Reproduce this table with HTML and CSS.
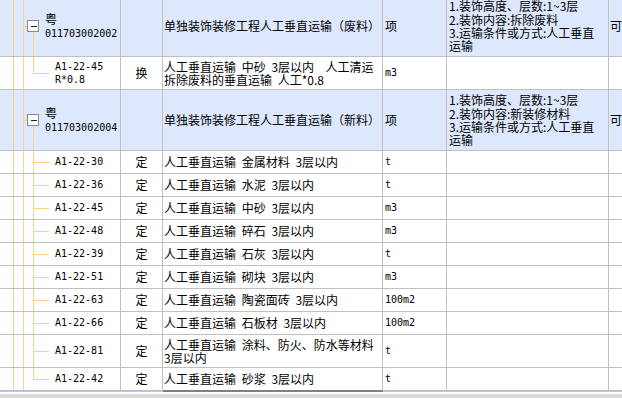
FILE: index.html
```html
<!DOCTYPE html>
<html lang="zh-CN">
<head>
<meta charset="utf-8">
<title>清单</title>
<link rel="stylesheet" href="styles.css">
</head>
<body>
<div class="grid">
  <div class="row head h61">
    <div class="c tree gh"><span class="box"></span><div class="gname">粤<br><span class="mono">011703002002</span></div></div>
    <div class="c type"></div>
    <div class="c name">单独装饰装修工程人工垂直运输（废料）</div>
    <div class="c unit">项</div>
    <div class="c feat">1.装饰高度、层数:1~3层<br>2.装饰内容:拆除废料<br>3.运输条件或方式:人工垂直<br>运输</div>
    <div class="c more">可</div>
  </div>
  <div class="row h33">
    <div class="c tree cl"><span class="code mono">A1-22-45<br>R*0.8</span></div>
    <div class="c type">换</div>
    <div class="c name">人工垂直运输 中砂 3层以内&nbsp; 人工清运<br>拆除废料的垂直运输 人工*0.8</div>
    <div class="c unit mono">m3</div>
    <div class="c feat"></div>
    <div class="c more"></div>
  </div>
  <div class="row head h61">
    <div class="c tree gh"><span class="box"></span><div class="gname">粤<br><span class="mono">011703002004</span></div></div>
    <div class="c type"></div>
    <div class="c name">单独装饰装修工程人工垂直运输（新料）</div>
    <div class="c unit">项</div>
    <div class="c feat">1.装饰高度、层数:1~3层<br>2.装饰内容:新装修材料<br>3.运输条件或方式:人工垂直<br>运输</div>
    <div class="c more">可</div>
  </div>
  <div class="row h23">
    <div class="c tree ch"><span class="code mono">A1-22-30</span></div>
    <div class="c type">定</div>
    <div class="c name">人工垂直运输 金属材料 3层以内</div>
    <div class="c unit mono">t</div>
    <div class="c feat"></div>
    <div class="c more"></div>
  </div>
  <div class="row h23">
    <div class="c tree ch"><span class="code mono">A1-22-36</span></div>
    <div class="c type">定</div>
    <div class="c name">人工垂直运输 水泥 3层以内</div>
    <div class="c unit mono">t</div>
    <div class="c feat"></div>
    <div class="c more"></div>
  </div>
  <div class="row h23">
    <div class="c tree ch"><span class="code mono">A1-22-45</span></div>
    <div class="c type">定</div>
    <div class="c name">人工垂直运输 中砂 3层以内</div>
    <div class="c unit mono">m3</div>
    <div class="c feat"></div>
    <div class="c more"></div>
  </div>
  <div class="row h23">
    <div class="c tree ch"><span class="code mono">A1-22-48</span></div>
    <div class="c type">定</div>
    <div class="c name">人工垂直运输 碎石 3层以内</div>
    <div class="c unit mono">m3</div>
    <div class="c feat"></div>
    <div class="c more"></div>
  </div>
  <div class="row h23">
    <div class="c tree ch"><span class="code mono">A1-22-39</span></div>
    <div class="c type">定</div>
    <div class="c name">人工垂直运输 石灰 3层以内</div>
    <div class="c unit mono">t</div>
    <div class="c feat"></div>
    <div class="c more"></div>
  </div>
  <div class="row h23">
    <div class="c tree ch"><span class="code mono">A1-22-51</span></div>
    <div class="c type">定</div>
    <div class="c name">人工垂直运输 砌块 3层以内</div>
    <div class="c unit mono">m3</div>
    <div class="c feat"></div>
    <div class="c more"></div>
  </div>
  <div class="row h23">
    <div class="c tree ch"><span class="code mono">A1-22-63</span></div>
    <div class="c type">定</div>
    <div class="c name">人工垂直运输 陶瓷面砖 3层以内</div>
    <div class="c unit mono">100m2</div>
    <div class="c feat"></div>
    <div class="c more"></div>
  </div>
  <div class="row h23">
    <div class="c tree ch"><span class="code mono">A1-22-66</span></div>
    <div class="c type">定</div>
    <div class="c name">人工垂直运输 石板材 3层以内</div>
    <div class="c unit mono">100m2</div>
    <div class="c feat"></div>
    <div class="c more"></div>
  </div>
  <div class="row h33">
    <div class="c tree ch"><span class="code mono">A1-22-81</span></div>
    <div class="c type">定</div>
    <div class="c name">人工垂直运输 涂料、防火、防水等材料<br>3层以内</div>
    <div class="c unit mono">t</div>
    <div class="c feat"></div>
    <div class="c more"></div>
  </div>
  <div class="row h23 last">
    <div class="c tree cl"><span class="code mono">A1-22-42</span></div>
    <div class="c type">定</div>
    <div class="c name">人工垂直运输 砂浆 3层以内</div>
    <div class="c unit mono">t</div>
    <div class="c feat"></div>
    <div class="c more"></div>
  </div>
  <div class="row foot">
    <div></div><div></div><div class="sel"></div><div></div><div></div><div></div>
  </div>
  <div class="band"></div>
</div>
</body>
</html>
```

FILE: styles.css
```css
html, body {
  margin: 0;
  padding: 0;
  background: #fff;
  overflow: hidden;
}
body {
  width: 622px;
  height: 398px;
  font-family: "Noto Sans CJK SC", "Noto Sans", sans-serif;
  font-size: 12px;
  line-height: 13.4px;
  color: #000;
}
.grid {
  margin-top: -4px;
}
.row {
  display: grid;
  grid-template-columns: 121px 42px 220px 64px 162px 1fr;
}
.h61 { height: 61px; }
.h33 { height: 33px; }
.h23 { height: 23px; }
.head { background: #dde8fc; }
.c {
  box-sizing: border-box;
  border-right: 1px solid #c0c0c0;
  border-bottom: 1px solid #c0c0c0;
  display: flex;
  align-items: center;
  overflow: hidden;
  white-space: nowrap;
  word-spacing: 3px;
}
.mono {
  font-family: "DejaVu Sans Mono", "Liberation Mono", monospace;
  font-size: 10px;
  word-spacing: 0;
}
.type { justify-content: center; }
.name { padding-left: 1px; }
.unit { padding-left: 2px; }
.feat { padding-left: 2px; word-spacing: 0; }
.more { padding-left: 1px; border-right: 0; }

/* tree column */
.tree {
  --ln: #ffd08c;
  background-repeat: no-repeat;
  background-image:
    linear-gradient(var(--ln), var(--ln)),
    linear-gradient(var(--ln), var(--ln));
  background-position: 13px 0, 23px 0;
  background-size: 1px 100%, 1px 100%;
}
.tree.gh {
  padding-left: 27px;
  background-image:
    linear-gradient(var(--ln), var(--ln)),
    linear-gradient(var(--ln), var(--ln)),
    linear-gradient(var(--ln), var(--ln)),
    linear-gradient(var(--ln), var(--ln));
  background-position: 13px 0, 23px 0, 24px 50%, 33px 100%;
  background-size: 1px 100%, 1px 100%, 3px 1px, 1px calc(50% - 6px);
}
.tree.ch {
  padding-left: 55px;
  background-image:
    linear-gradient(var(--ln), var(--ln)),
    linear-gradient(var(--ln), var(--ln)),
    linear-gradient(var(--ln), var(--ln)),
    linear-gradient(var(--ln), var(--ln));
  background-position: 13px 0, 23px 0, 33px 0, 33px 50%;
  background-size: 1px 100%, 1px 100%, 1px 100%, 16px 1px;
}
.tree.cl {
  padding-left: 55px;
  background-image:
    linear-gradient(var(--ln), var(--ln)),
    linear-gradient(var(--ln), var(--ln)),
    linear-gradient(var(--ln), var(--ln)),
    linear-gradient(var(--ln), var(--ln));
  background-position: 13px 0, 23px 0, 33px 0, 33px 50%;
  background-size: 1px 100%, 1px 100%, 1px 50%, 16px 1px;
}
.box {
  flex: none;
  box-sizing: border-box;
  width: 12px;
  height: 12px;
  border: 1px solid #8a8a8a;
  background: #fff linear-gradient(#222, #222) no-repeat 3px 4.5px / 6px 1px;
}
.gname {
  margin-left: 6px;
}

/* bottom edge */
.last .name { border-bottom-color: #808080; }
.foot {
  height: 1px;
  background: #a9cdef;
}
.foot .sel { background: #808080; }
.band {
  margin-top: 2px;
  height: 4px;
  background: #dadada;
}
```
